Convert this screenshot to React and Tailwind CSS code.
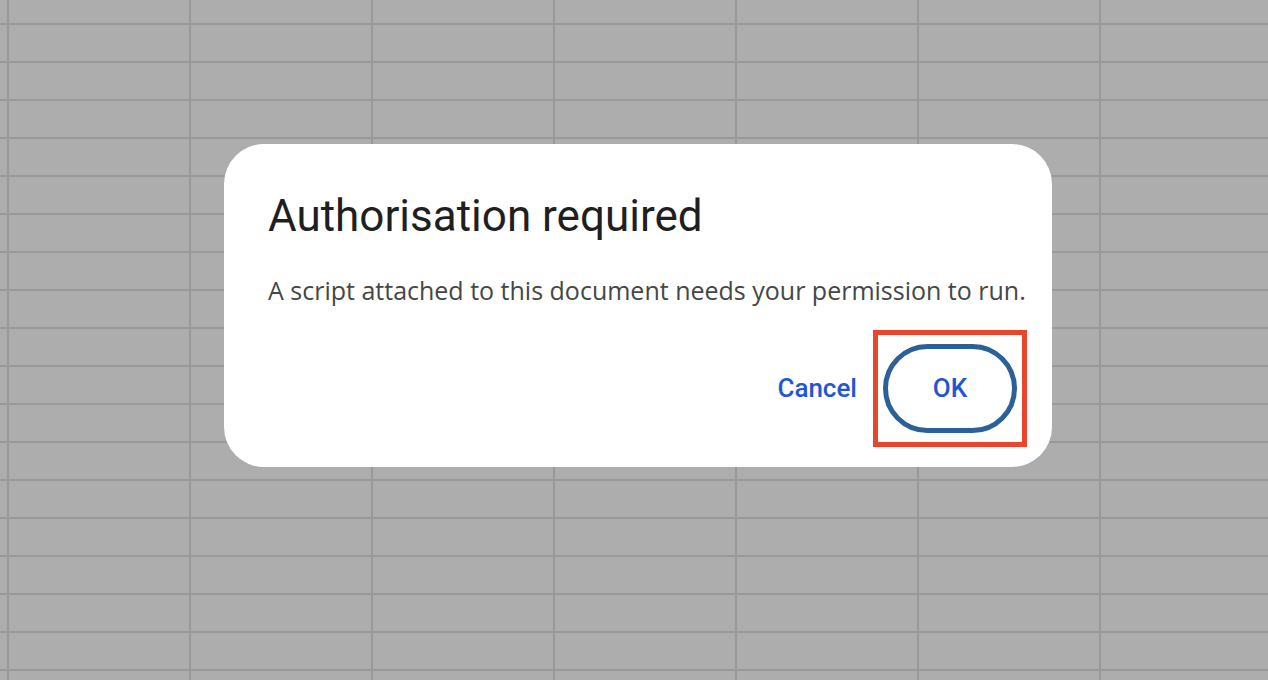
import React from "react";

const ROWS = 18;
const COLS = 7;

function Grid() {
  return (
    <div className="absolute inset-0 overflow-hidden bg-[#adadad]">
      <div className="flex flex-col">
        <div className="h-[25px] border-b-2 border-[#999999] shrink-0 flex">
          <Cells />
        </div>
        {Array.from({ length: ROWS }).map((_, r) => (
          <div key={r} className="h-[38px] border-b-2 border-[#999999] shrink-0 flex">
            <Cells />
          </div>
        ))}
      </div>
    </div>
  );
}

function Cells() {
  return (
    <>
      <div className="w-[9px] shrink-0 border-r-2 border-[#999999]" />
      {Array.from({ length: COLS }).map((_, c) => (
        <div key={c} className="w-[182px] shrink-0 border-r-2 border-[#999999]" />
      ))}
    </>
  );
}

export default function App() {
  return (
    <div className="relative w-[1268px] h-[680px] overflow-hidden" style={{ fontFamily: "Roboto, 'Liberation Sans', sans-serif" }}>
      <Grid />
      <div className="absolute left-[224px] top-[144px] w-[828px] h-[323px] bg-white rounded-[40px] flex flex-col pl-[44px] pr-[25px]">
        <h1 className="mt-[46px] text-[44px] leading-[52px] text-[#1f1f1f] font-normal">Authorisation required</h1>
        <p className="mt-[32px] text-[25px] leading-[32px] text-[#444746] font-['Open_Sans',sans-serif] whitespace-nowrap">
          A script attached to this document needs your permission to run.
        </p>
        <div className="mt-[24px] flex items-center justify-end gap-[16px]">
          <button className="text-[26px] font-medium text-[#1f57d3]">Cancel</button>
          <div className="border-[5px] border-[#e8452c] w-[154px] h-[117px] flex items-center justify-center">
            <button className="w-[134px] h-[89px] rounded-full border-[5px] border-[#2b6099] text-[26px] font-medium text-[#1f57d3]">
              OK
            </button>
          </div>
        </div>
      </div>
    </div>
  );
}
